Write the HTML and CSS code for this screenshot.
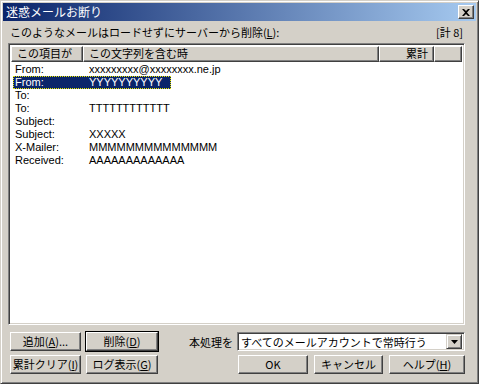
FILE: index.html
```html
<!DOCTYPE html>
<html lang="ja">
<head>
    <meta charset="utf-8">
    <title>迷惑メールお断り</title>
    <link rel="stylesheet" href="styles.css">
</head>
<body>
    <div class="window">
        <div class="titlebar">
            <span class="title">迷惑メールお断り</span>
            <span class="close">
                <svg width="8" height="7" viewBox="0 0 8 7"><path d="M0 0h2l2 2 2-2h2L5 3.5 8 7H6L4 5 2 7H0l3-3.5z" fill="#000"/></svg>
            </span>
        </div>

        <div class="content">
            <div class="caption">
                <span>このようなメールはロードせずにサーバーから削除(<u>L</u>):</span>
                <span>[計 8]</span>
            </div>

            <div class="listbox">
                <div class="list-head">
                    <div class="col col-field">この項目が</div>
                    <div class="col col-text">この文字列を含む時</div>
                    <div class="col col-count">累計</div>
                    <div class="col col-rest"></div>
                </div>
                <div class="row"><span class="c1">From:</span><span class="c2">xxxxxxxxx@xxxxxxxx.ne.jp</span></div>
                <div class="row selected"><span class="sel"><span class="c1">From:</span><span class="c2">YYYYYYYYYY</span></span></div>
                <div class="row"><span class="c1">To:</span><span class="c2"></span></div>
                <div class="row"><span class="c1">To:</span><span class="c2">TTTTTTTTTTTT</span></div>
                <div class="row"><span class="c1">Subject:</span><span class="c2"></span></div>
                <div class="row"><span class="c1">Subject:</span><span class="c2">XXXXX</span></div>
                <div class="row"><span class="c1">X-Mailer:</span><span class="c2">MMMMMMMMMMMMMM</span></div>
                <div class="row"><span class="c1">Received:</span><span class="c2">AAAAAAAAAAAAA</span></div>
            </div>

            <div class="actions first">
                <button class="btn w71">追加(<u>A</u>)...</button>
                <button class="btn w72 default">削除(<u>D</u>)</button>
                <div class="mode">
                    <span class="mode-label">本処理を</span>
                    <div class="combo">
                        <span class="combo-value">すべてのメールアカウントで常時行う</span>
                        <span class="combo-btn"><svg width="7" height="4" viewBox="0 0 7 4"><path d="M0 0h7L3.5 4z" fill="#000"/></svg></span>
                    </div>
                </div>
            </div>
            <div class="actions">
                <button class="btn w71">累計クリア(<u>I</u>)</button>
                <button class="btn w72">ログ表示(<u>G</u>)</button>
                <div class="dialog-btns">
                    <button class="btn w70">OK</button>
                    <button class="btn w69">キャンセル</button>
                    <button class="btn w76">ヘルプ(<u>H</u>)</button>
                </div>
            </div>
        </div>
    </div>
</body>
</html>
```

FILE: styles.css
```css
:root {
    --face: #d4d0c8;
    --shadow: #808080;
    --dark: #404040;
    --highlight: #0a246a;
}

body {
    margin: 0;
    background: var(--face);
    font-family: "Noto Sans CJK JP", "DejaVu Sans", sans-serif;
    font-size: 11px;
    color: #000;
}

.window {
    width: 479px;
    height: 384px;
    box-sizing: border-box;
    background: var(--face);
    border: 1px solid;
    border-color: var(--face) var(--dark) var(--dark) var(--face);
    box-shadow: inset 1px 1px #fff, inset -1px -1px var(--shadow);
    padding: 2px;
}

.titlebar {
    height: 18px;
    background: linear-gradient(to right, #0a246a, #a6caf0);
    display: flex;
    align-items: center;
    justify-content: space-between;
    padding: 0 2px 0 3px;
    color: #fff;
}

.title {
    font-size: 12px;
    line-height: 18px;
}

.close {
    width: 14px;
    height: 12px;
    background: var(--face);
    border: 1px solid;
    border-color: #fff var(--dark) var(--dark) #fff;
    box-shadow: inset -1px -1px var(--shadow);
    display: flex;
    align-items: center;
    justify-content: center;
}

.content {
    padding: 0 11px 0 5px;
}

.caption {
    display: flex;
    justify-content: space-between;
    padding: 4px 2px 0 2px;
    height: 18px;
    line-height: 14px;
}

.listbox {
    height: 282px;
    box-sizing: border-box;
    background: #fff;
    border: 1px solid;
    border-color: var(--shadow) #fff #fff var(--shadow);
    box-shadow: inset 1px 1px var(--dark), inset -1px -1px var(--face);
    padding: 2px;
    overflow: hidden;
}

.list-head {
    display: flex;
    height: 16px;
    margin-bottom: 1px;
}

.col {
    box-sizing: border-box;
    background: var(--face);
    border: 1px solid;
    border-color: #fff var(--dark) var(--dark) #fff;
    box-shadow: inset -1px -1px var(--shadow);
    line-height: 13px;
    padding: 0 5px;
    white-space: nowrap;
}

.col-field { width: 72px; }
.col-text { width: 296px; }
.col-count { width: 55px; text-align: right; }
.col-rest { flex: 1; }

.row {
    height: 13px;
    line-height: 13px;
    display: flex;
    white-space: nowrap;
    font-family: "Liberation Sans", Arial, sans-serif;
}

.c1 {
    width: 74px;
    padding-left: 4px;
    flex-shrink: 0;
}

.selected {
    padding-left: 2px;
}

.sel {
    display: flex;
    width: 158px;
    background: var(--highlight);
    color: #fff;
    outline: 1px dotted #e8e800;
    outline-offset: -1px;
}

.sel .c1 {
    padding-left: 2px;
}

.actions {
    display: flex;
    align-items: center;
    gap: 5px;
    margin-top: 4px;
    padding-left: 2px;
}

.actions.first {
    margin-top: 7px;
}

.btn {
    height: 19px;
    box-sizing: border-box;
    font: inherit;
    background: var(--face);
    border: 1px solid;
    border-color: #fff var(--dark) var(--dark) #fff;
    box-shadow: inset -1px -1px var(--shadow);
    padding: 0;
    line-height: 15px;
    color: #000;
}

.btn.default {
    outline: 1px solid #000;
}

.w69 { width: 69px; }
.w70 { width: 70px; }
.w71 { width: 71px; }
.w72 { width: 72px; }
.w76 { width: 76px; }

.mode {
    margin-left: auto;
    display: flex;
    align-items: center;
    gap: 4px;
}

.combo {
    width: 228px;
    height: 19px;
    box-sizing: border-box;
    background: #fff;
    border: 1px solid;
    border-color: var(--shadow) #fff #fff var(--shadow);
    box-shadow: inset 1px 1px var(--dark), inset -1px -1px var(--face);
    display: flex;
    align-items: center;
    justify-content: space-between;
    padding: 2px;
}

.combo-value {
    padding-left: 1px;
    line-height: 14px;
    white-space: nowrap;
}

.combo-btn {
    width: 16px;
    height: 15px;
    box-sizing: border-box;
    background: var(--face);
    border: 1px solid;
    border-color: var(--face) var(--dark) var(--dark) var(--face);
    box-shadow: inset 1px 1px #fff, inset -1px -1px var(--shadow);
    display: flex;
    align-items: center;
    justify-content: center;
}

.dialog-btns {
    margin-left: auto;
    display: flex;
    gap: 6px;
}
```
